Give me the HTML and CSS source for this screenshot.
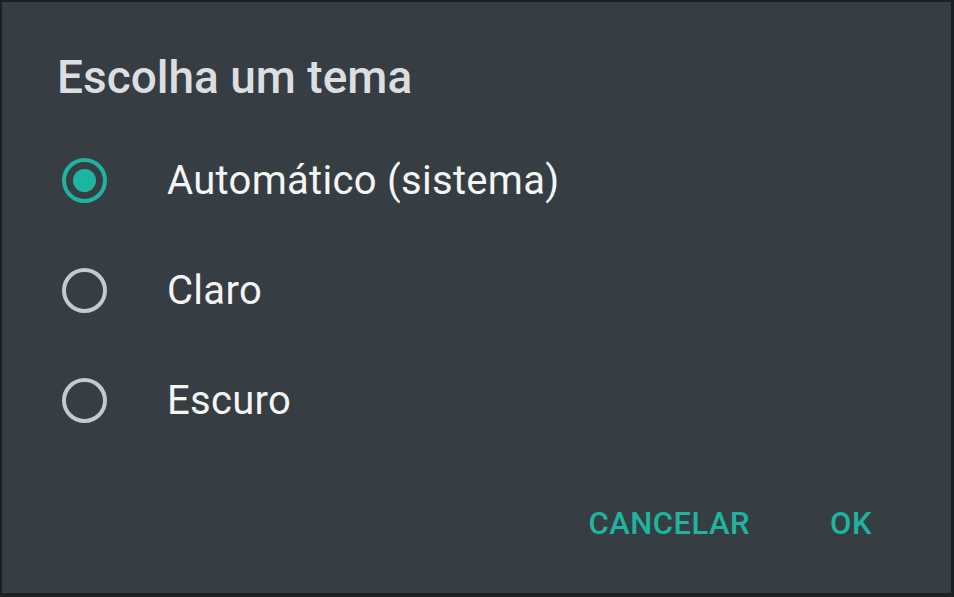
FILE: index.html
```html
<!DOCTYPE html>
<html lang="pt">
<head>
<meta charset="utf-8">
<title>Escolha um tema</title>
<link rel="stylesheet" href="styles.css">
</head>
<body>
<div class="dialog">
  <h1 class="title">Escolha um tema</h1>
  <ul class="options">
    <li class="option">
      <span class="radio checked"><span class="dot"></span></span>
      <span class="label">Automático (sistema)</span>
    </li>
    <li class="option">
      <span class="radio"></span>
      <span class="label">Claro</span>
    </li>
    <li class="option">
      <span class="radio"></span>
      <span class="label">Escuro</span>
    </li>
  </ul>
  <div class="actions">
    <span class="btn">CANCELAR</span>
    <span class="btn">OK</span>
  </div>
</div>
</body>
</html>
```

FILE: styles.css
```css
html, body {
  margin: 0;
  padding: 0;
  background: #1b2024;
}
.dialog {
  box-sizing: border-box;
  width: 954px;
  height: 597px;
  background: #363d43;
  border-style: solid;
  border-color: #1b2024;
  border-width: 2px 3px 4px 2px;
  font-family: Roboto, "Liberation Sans", sans-serif;
  padding: 49px 79px 0 55px;
  display: flex;
  flex-direction: column;
}
.title {
  margin: 0;
  font-size: 46px;
  line-height: 52px;
  font-weight: 500;
  color: #dcdee0;
}
.options {
  list-style: none;
  margin: 22px 0 0 0;
  padding: 0;
  display: flex;
  flex-direction: column;
}
.option {
  height: 110px;
  display: flex;
  align-items: center;
}
.radio {
  box-sizing: border-box;
  width: 45px;
  height: 45px;
  margin-left: 5px;
  border: 4px solid #c6c9cb;
  border-radius: 50%;
  display: flex;
  align-items: center;
  justify-content: center;
}
.radio.checked {
  border-color: #1eb5a0;
}
.dot {
  width: 23px;
  height: 23px;
  border-radius: 50%;
  background: #1eb5a0;
}
.label {
  margin-left: 60px;
  font-size: 40px;
  letter-spacing: 0.3px;
  color: #f4f5f5;
}
.actions {
  margin-top: 39px;
  display: flex;
  justify-content: flex-end;
  gap: 80px;
}
.btn {
  font-size: 31px;
  line-height: 60px;
  font-weight: 500;
  letter-spacing: 0.5px;
  color: #1eb5a0;
}
```
